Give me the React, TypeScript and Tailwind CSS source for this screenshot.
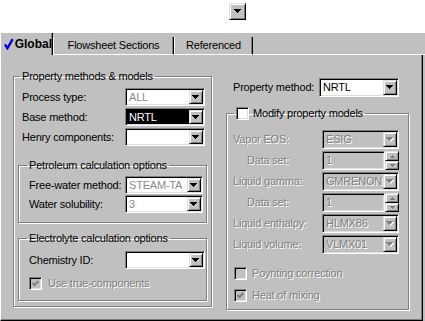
import React from 'react';

const DIM = 'text-[#808080] [text-shadow:1px_1px_0_#fff]';
const GROUP = 'border border-[#808080] shadow-[inset_1px_1px_0_#fff,1px_1px_0_#fff]';
const SUNKEN = 'border border-[#808080] border-b-white border-r-white shadow-[inset_1px_1px_0_#000,inset_-1px_-1px_0_#dfdfdf]';
const RAISED = 'bg-[#c0c0c0] border border-[#dfdfdf] border-b-black border-r-black shadow-[inset_1px_1px_0_#fff,inset_-1px_-1px_0_#808080]';

const Tri = ({ dim, up }: { dim?: boolean; up?: boolean }) => (
  <svg width="8" height="5" viewBox="0 0 8 5" className={up ? 'rotate-180' : ''}>
    {dim && <path d="M1 1h7v1h-1v1h-1v1h-1v1h-1v-1h-1v-1h-1v-1h-1z" fill="#fff" />}
    <path d="M0 0h7v1h-1v1h-1v1h-1v1h-1v-1h-1v-1h-1v-1h-1z" fill={dim ? '#808080' : '#000'} />
  </svg>
);

const SmallTri = ({ up }: { up?: boolean }) => (
  <svg width="5" height="3" viewBox="0 0 5 3" className={up ? 'rotate-180' : ''}>
    <path d="M0 0h5v1h-1v1h-1v1h-1v-1h-1v-1h-1z" fill="#808080" />
  </svg>
);

interface ComboProps {
  value: string;
  className: string;
  field?: string;
  text?: string;
  dim?: boolean;
}

const Combo = ({ value, className, field = 'bg-white', text = 'text-black', dim }: ComboProps) => (
  <div className={`flex p-[1px] ${SUNKEN} ${field} ${className}`}>
    <span className={`flex-1 min-w-0 flex items-center overflow-hidden whitespace-nowrap pl-[2px] ${text}`}>{value}</span>
    <div className={`w-[14px] flex items-center justify-center ${RAISED}`}>
      <Tri dim={dim} />
    </div>
  </div>
);

const SpinField = ({ value }: { value: string }) => (
  <div className="flex h-[19px] w-[77px]">
    <div className={`w-[63px] flex items-center pl-[3px] bg-[#c0c0c0] ${SUNKEN} ${DIM}`}>{value}</div>
    <div className="w-[14px] flex flex-col">
      <div className={`h-[10px] flex items-center justify-center ${RAISED}`}><SmallTri up /></div>
      <div className={`h-[9px] flex items-center justify-center ${RAISED}`}><SmallTri /></div>
    </div>
  </div>
);

const Check = ({ checked, disabled }: { checked?: boolean; disabled?: boolean }) => (
  <div className={`w-[13px] h-[13px] shrink-0 flex items-center justify-center ${SUNKEN} ${disabled ? 'bg-[#c0c0c0]' : 'bg-white'}`}>
    {checked && (
      <svg width="7" height="7" viewBox="0 0 7 7">
        <path d="M0.5 3 L2.5 5 L6.5 1" stroke="#808080" strokeWidth="2" fill="none" />
      </svg>
    )}
  </div>
);

export default function App() {
  return (
    <div className="w-[425px] h-[321px] bg-[#c0c0c0] font-['Liberation_Sans',Arial,sans-serif] text-[11px] leading-[13px] tracking-[-0.2px] text-black overflow-hidden">
      {/* top strip with a lone dropdown button */}
      <div className="h-[33px] bg-white pt-[3px] pl-[229px]">
        <div className={`w-[17px] h-[17px] flex items-center justify-center ${RAISED}`}>
          <Tri />
        </div>
      </div>

      {/* tabs */}
      <div className="flex items-end h-[22px]">
        <div className="h-[22px] w-[53px] flex items-center gap-[1px] pl-[3px] border-l border-white border-r border-r-black shadow-[inset_-1px_0_0_#808080]">
          <svg width="10" height="12" viewBox="0 0 10 12">
            <path d="M1 6.5 L3.5 10.5 L9 1" stroke="#0000e0" strokeWidth="2.4" fill="none" />
          </svg>
          <span className="font-bold text-[12px] tracking-normal">Global</span>
        </div>
        <div className="h-[18px] w-[121px] flex items-center justify-center border-l border-white border-r border-r-black border-b border-b-white shadow-[inset_-1px_0_0_#808080]">
          Flowsheet Sections
        </div>
        <div className="h-[18px] w-[79px] flex items-center justify-center border-l border-white border-r border-r-black border-b border-b-white shadow-[inset_-1px_0_0_#808080]">
          Referenced
        </div>
        <div className="flex-1 h-full border-b border-white" />
      </div>

      {/* panel */}
      <div className="w-[423px] h-[266px] flex border-l border-white border-r border-r-black border-b border-b-black shadow-[inset_-1px_-1px_0_#808080]">
        {/* left column */}
        <div className="ml-[12px] mt-[15px] w-[199px]">
          <fieldset className={`${GROUP} w-[199px] px-[4px] pb-[5px]`}>
            <legend className="ml-[2px] px-[2px]">Property methods &amp; models</legend>
            <div className="pt-[5px] pl-[4px] grid grid-cols-[103px_80px] gap-y-[2px] items-center">
              <span>Process type:</span>
              <Combo value="ALL" className="h-[18px]" text="text-[#8a8a8a]" />
              <span>Base method:</span>
              <Combo value="NRTL" className="h-[18px]" field="bg-black" text="text-white" />
              <span>Henry components:</span>
              <Combo value="" className="h-[18px]" />
            </div>

            <fieldset className={`${GROUP} mt-[13px] w-[189px] pl-[9px] pb-[9px]`}>
              <legend className="-ml-[1px] px-[2px]">Petroleum calculation options</legend>
              <div className="pt-[4px] pl-[1px] grid grid-cols-[96px_78px] gap-y-[1px] items-center">
                <span>Free-water method:</span>
                <Combo value="STEAM-TA" className="h-[18px]" text="text-[#8a8a8a]" />
                <span>Water solubility:</span>
                <Combo value="3" className="h-[18px]" text="text-[#8a8a8a]" />
              </div>
            </fieldset>

            <fieldset className={`${GROUP} mt-[9px] w-[189px] pl-[9px] pb-[10px]`}>
              <legend className="-ml-[1px] px-[2px]">Electrolyte calculation options</legend>
              <div className="pt-[6px] pl-[1px] grid grid-cols-[96px_80px] items-center">
                <span>Chemistry ID:</span>
                <Combo value="" className="h-[18px]" />
              </div>
              <div className="mt-[8px] pl-[1px] flex items-center gap-[6px]">
                <Check checked disabled />
                <span className={DIM}>Use true-components</span>
              </div>
            </fieldset>
          </fieldset>
        </div>

        {/* right column */}
        <div className="ml-[14px] w-[183px]">
          <div className="mt-[23px] pl-[7px] grid grid-cols-[86px_80px] items-center">
            <span>Property method:</span>
            <Combo value="NRTL" className="h-[19px]" />
          </div>

          <fieldset className={`${GROUP} mt-[10px] w-[183px] pl-[6px] pb-[7px]`}>
            <legend className="ml-[1px] px-[2px] flex items-center gap-[4px]">
              <Check />
              <span>Modify property models</span>
            </legend>
            <div className="pt-[10px] grid grid-cols-[89px_77px] gap-y-[2px] items-center">
              <span className={DIM}>Vapor EOS:</span>
              <Combo value="ESIG" className="h-[19px]" field="bg-[#c0c0c0]" text={DIM} dim />
              <span className={`pl-[14px] ${DIM}`}>Data set:</span>
              <SpinField value="1" />
              <span className={DIM}>Liquid gamma:</span>
              <Combo value="GMRENON" className="h-[19px]" field="bg-[#c0c0c0]" text={DIM} dim />
              <span className={`pl-[14px] ${DIM}`}>Data set:</span>
              <SpinField value="1" />
              <span className={DIM}>Liquid enthalpy:</span>
              <Combo value="HLMX86" className="h-[19px]" field="bg-[#c0c0c0]" text={DIM} dim />
              <span className={DIM}>Liquid volume:</span>
              <Combo value="VLMX01" className="h-[19px]" field="bg-[#c0c0c0]" text={DIM} dim />
            </div>
            <div className="mt-[13px] pl-[1px] flex items-center gap-[5px]">
              <Check disabled />
              <span className={DIM}>Poynting correction</span>
            </div>
            <div className="mt-[9px] pl-[1px] flex items-center gap-[5px]">
              <Check checked disabled />
              <span className={DIM}>Heat of mixing</span>
            </div>
          </fieldset>
        </div>
      </div>
    </div>
  );
}
